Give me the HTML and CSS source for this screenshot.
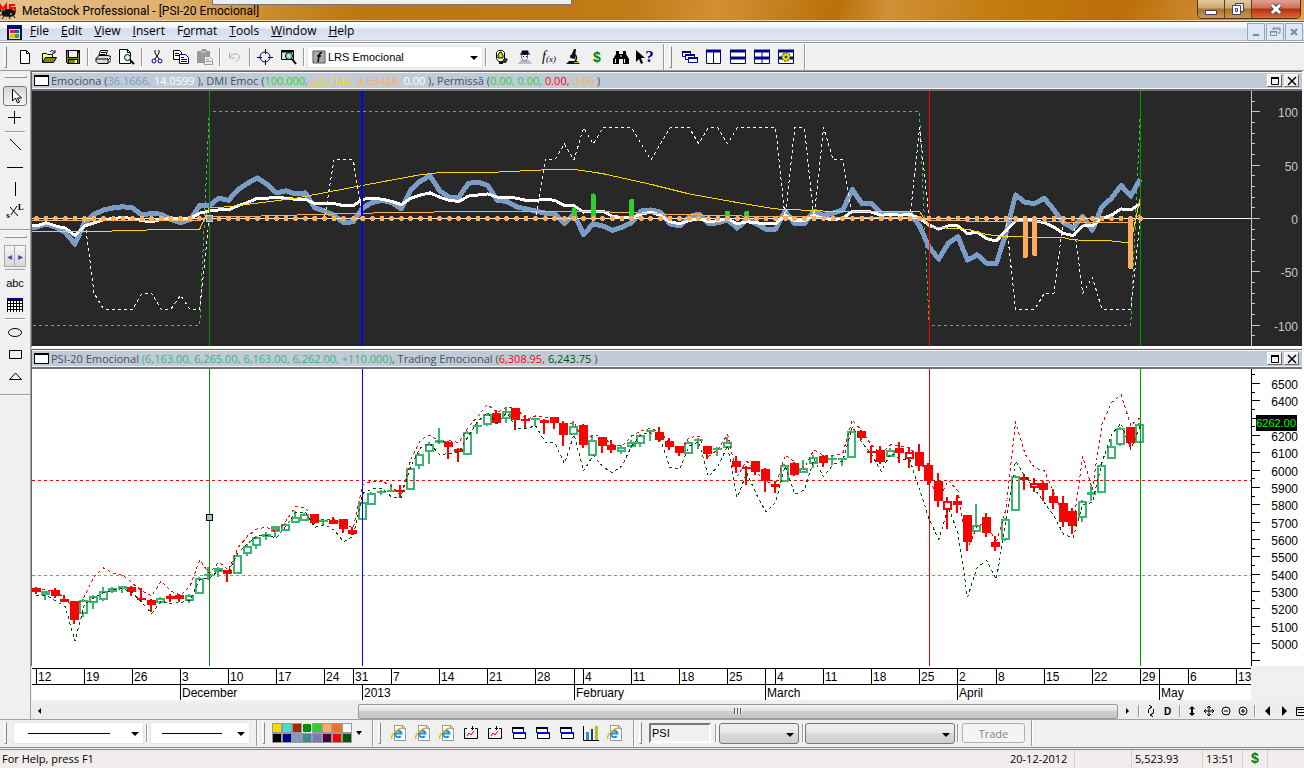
FILE: index.html
```html
<!DOCTYPE html>
<html lang="en">
<head>
  <meta charset="UTF-8" />
  <meta name="viewport" content="width=device-width, initial-scale=1.0"/>
  <title>MetaStock Professional - [PSI-20 Emocional]</title>
  <link rel="stylesheet" href="styles.css">
</head>
<body>

  <!-- shared icons -->
  <svg class="defs" width="0" height="0" aria-hidden="true">
    <symbol id="i-ie" viewBox="0 0 16 16">
      <path d="M3.500.5h8l3 3v12h-11z" fill="#fff" stroke="#999"/>
      <path d="M11.500.5v3h3" fill="none" stroke="#999"/>
      <path d="M4 8.500h6.500A3.300 3.300 0 1 0 9.800 11" fill="none" stroke="#1e8fd8" stroke-width="2"/>
      <path d="M1 14C-1 11 5 4 11 3" fill="none" stroke="#e8b020" stroke-width="1.500"/>
    </symbol>
    <symbol id="i-chartwin" viewBox="0 0 16 16">
      <path d="M4 3.500H1.500v10h13v-10H12M9.500 1v4M8 3.500h3" fill="none" stroke="#000"/>
      <path d="M4 11l2-3 2 2 3-4" fill="none" stroke="#e00"/>
    </symbol>
    <symbol id="i-panes" viewBox="0 0 16 16">
      <path d="M1.500 2.500h11v5h-11zM2.500 7.500h12v6h-12z" fill="#fff" stroke="#000"/>
      <path d="M1 3h12" stroke="#000" stroke-width="2"/>
      <path d="M2 8h12" stroke="#00f" stroke-width="2"/>
    </symbol>
  </svg>

  <header class="titlebar">
    <svg class="logo" width="18" height="20" viewBox="0 0 18 20">
      <path d="M0 11V4l3 4 3-4v7M15 4h-5v3h5v4" fill="none" stroke="#f00" stroke-width="2"/>
      <path d="M2 12c0-4 11-5 13-1 1 4-5 5-7 4-3 1-6-1-6-3zM0 9l4 2M0 14h4M4 15l-2 3M9 15l1 3M13 14l2 3" fill="#111" stroke="#111"/>
      <path d="M10 12h2v2h-2z" fill="#2aa"/>
    </svg>
    <h1>MetaStock Professional - [PSI-20 Emocional]</h1>
    <div class="ghost-window"></div>
    <div class="win-buttons">
      <button title="Minimize"><svg width="14" height="14"><path d="M1.500 8.500h11v4h-11z" fill="#fff" stroke="#445"/></svg></button>
      <button title="Restore"><svg width="14" height="14"><path d="M4.500 1.500h8v8h-8z" fill="#eee" stroke="#445"/><path d="M1.500 3.500h8v9h-8zM4.500 6.500h2v3h-2z" fill="#fff" stroke="#445"/></svg></button>
      <button class="win-close" title="Close"><svg width="14" height="14"><path d="M3 3l8 8M11 3l-8 8" stroke="#445" stroke-width="5"/><path d="M3 3l8 8M11 3l-8 8" stroke="#fff" stroke-width="3"/></svg></button>
    </div>
  </header>

  <nav class="menubar">
    <svg class="doc-icon" width="15" height="15" shape-rendering="crispEdges"><path d="M0 0h15v15H0z" fill="#113"/><path d="M1 1h13v2H1z" fill="#00a"/><path d="M2 4h11v10H2z" fill="#ddd"/><path d="M3 5h5v3H3z" fill="#f06"/><path d="M8 5h4v3H8z" fill="#06c"/><path d="M3 9h5v4H3z" fill="#cc0"/><path d="M8 9h4v4H8z" fill="#3a3"/></svg>
    <a href="#"><u>F</u>ile</a>
    <a href="#"><u>E</u>dit</a>
    <a href="#"><u>V</u>iew</a>
    <a href="#"><u>I</u>nsert</a>
    <a href="#">F<u>o</u>rmat</a>
    <a href="#"><u>T</u>ools</a>
    <a href="#"><u>W</u>indow</a>
    <a href="#"><u>H</u>elp</a>
    <div class="mdi-buttons">
      <button title="Minimize chart"><svg width="12" height="12"><path d="M3 9h6" stroke="#7b8794" stroke-width="2"/></svg></button>
      <button title="Restore chart"><svg width="12" height="12"><path d="M4 4V2h7v5H9M4 3h7M1.500 5.500h6v4h-6zM1 6h7" fill="none" stroke="#7b8794"/></svg></button>
      <button title="Close chart"><svg width="12" height="12"><path d="M3 3l6 6M9 3l-6 6" stroke="#7b8794" stroke-width="2"/></svg></button>
    </div>
  </nav>

  <div class="toolbar">
    <i class="grip"></i>
    <button title="New"><svg width="16" height="16"><path d="M3.500 1.500h6l3 3v10h-9zM9.500 1.500v3h3" fill="#fff" stroke="#000"/></svg></button>
    <button title="Open"><svg width="16" height="16"><path d="M1.500 13.500v-9h4l1 1h5v3" fill="#ff8" stroke="#000"/><path d="M1.500 13.500l3-5h11l-3 5z" fill="#880" stroke="#000"/><path d="M9 3c1-2 3-2 4 0M14 1v3h-3" fill="none" stroke="#000"/></svg></button>
    <button title="Save"><svg width="16" height="16" shape-rendering="crispEdges"><path d="M1 1h14v14H2l-1-1z" fill="#000"/><path d="M2 2h1v12H2zM13 4h1v10h-1zM3 9h10v1H3z" fill="#880"/><path d="M4 2h8v6H4z" fill="#eee"/><path d="M4 11h6v3H4z" fill="#880"/><path d="M10 11h2v3h-2z" fill="#fff"/></svg></button>
    <i class="sep"></i>
    <button title="Print"><svg width="16" height="16"><path d="M3.500 7.500l2-6h7l-2 6" fill="#fff" stroke="#000"/><path d="M1 9.500l3-3h9l3 1v4l-3 3H3l-2-2z" fill="#ddd" stroke="#000"/><path d="M1 10h12v4M6 3.500h5M5 5.500h5M13 11l2-2" stroke="#000" fill="none"/><path d="M8 12h2" stroke="#cc0"/></svg></button>
    <button title="Print preview"><svg width="16" height="16"><path d="M.5.5h8l3 3v11H.500z" fill="#fff" stroke="#000"/><path d="M8.500.5v3h3" fill="none" stroke="#000"/><circle cx="8.500" cy="8.500" r="3" fill="#bff" stroke="#000"/><path d="M11 11l4 4" stroke="#000" stroke-width="2"/></svg></button>
    <i class="sep"></i>
    <button title="Cut"><svg width="16" height="16"><path d="M6 1v3l4 6M10 1v3l-4 6" fill="none" stroke="#000"/><g fill="none" stroke="#008"><circle cx="5" cy="12" r="2"/><circle cx="11" cy="12" r="2"/></g></svg></button>
    <button title="Copy"><svg width="16" height="16"><path d="M.500 1.500h6l2 2v7h-8z" fill="#fff" stroke="#000"/><path d="M2 4.500h4M2 6.500h4" stroke="#000"/><path d="M6.500 5.500h6l3 3v6h-9z" fill="#fff" stroke="#008"/><path d="M8 8.500h3M8 10.500h6M8 12.500h6" stroke="#008"/></svg></button>
    <button title="Paste" disabled><svg width="16" height="16"><path d="M0 2h4l1-2h4l1 2h3v12H0z" fill="#999"/><path d="M4 3h5" stroke="#ddd"/><path d="M7.500 7.500h5l3 3v5h-8z" fill="#eee" stroke="#999"/><path d="M9 10.500h3M9 12.500h5" stroke="#999"/></svg></button>
    <i class="sep"></i>
    <button title="Undo" disabled><svg width="16" height="16"><path d="M2.500 4v5h5M3 8c3-5 11-3 9 1-1 2-2 3-3 3" fill="none" stroke="#aaa"/></svg></button>
    <i class="sep"></i>
    <button title="Crosshair"><svg width="16" height="16"><circle cx="8" cy="8" r="5" fill="none" stroke="#008"/><path d="M8.500 0v5M8.500 11v5M0 8.500h5M11 8.500h5" stroke="#000"/></svg></button>
    <button title="Zoom chart"><svg width="16" height="16"><path d="M.500 1.500h12v9H.500z" fill="#ddd" stroke="#000"/><path d="M0 2.500h13" stroke="#000" stroke-width="2"/><circle cx="8" cy="7" r="3.500" fill="#8dd" stroke="#000"/><path d="M7 6l2 2" stroke="#fff"/><path d="M11 10l4 5" stroke="#000" stroke-width="2"/></svg></button>
    <i class="sep"></i>
    <div class="combo template">
      <svg width="14" height="14"><path d="M1 1h12v12H1z" fill="#aaa" stroke="#555"/><path d="M10 3c-3-1-3 3-4 9M5 6h4" fill="none" stroke="#000" stroke-width="1.500"/></svg>
      <select aria-label="Indicator"><option>LRS Emocional</option></select>
    </div>
    <i class="sep"></i>
    <button title="Expert"><svg width="16" height="16"><path d="M10 8l5 2-2 4H7z" fill="#333"/><path d="M3.500 3.500l2-2h4l2 2v6l-2 3h-4l-2-3z" fill="#fff" stroke="#000"/><path d="M5 6l2-3h1l2 3v3H5z" fill="#dd0" stroke="#000"/><path d="M6 12h4v3H6z" fill="#111"/></svg></button>
    <button title="Explorer"><svg width="16" height="16"><path d="M1 15l3-4h8l3 4z" fill="#bbb"/><path d="M4.500 5.500h6v4l-2 2h-2l-2-2z" fill="#eee" stroke="#777"/><path d="M5 2h6v3H5zM3 5h10" fill="#000" stroke="#000"/><path d="M6 7.500h1M9 7.500h1" stroke="#000"/><path d="M5 4h6" stroke="#008"/></svg></button>
    <button class="fx" title="Indicator builder">f<small>(x)</small></button>
    <button title="System tester"><svg width="16" height="16"><path d="M1 15l3-3h8l3 3zM5 9l4-9h2l-1 10z" fill="#111"/><path d="M5 7h5M10 6c2 1 2 4 0 6" fill="none" stroke="#111" stroke-width="1.500"/><path d="M9 13.500h4" stroke="#cc0"/></svg></button>
    <button class="dollar" title="Quotes">$</button>
    <button title="Find"><svg width="16" height="16"><path d="M3 2h3v3h4V2h3v3l3 5v5H10v-5H6v5H0v-5l3-5z" fill="#000"/><path d="M2.500 10v4M11.500 10v4M7 7h2" stroke="#fff"/></svg></button>
    <button class="help" title="Help"><svg width="9" height="16"><path d="M0 1v12l3-3 2 5 2-1-2-5h4z" fill="#000"/></svg><b>?</b></button>
    <i class="sep group-end"></i>
    <i class="grip"></i>
    <button title="Cascade"><svg width="16" height="16" fill="#fff" stroke="#008"><path d="M.500 2.500h8v5h-8z"/><path d="M3.500 5.500h9v5h-9z"/><path d="M6.500 8.500h9v5h-9z"/><path d="M0 3h9M3 6h10M6 9h10" stroke-width="2"/></svg></button>
    <button title="Tile columns"><svg width="16" height="16" fill="#fff" stroke="#008"><path d="M.500 1.500h14v13h-14zM7.500 1v14"/><path d="M0 2h15" stroke-width="3"/></svg></button>
    <button title="Tile rows"><svg width="16" height="16" fill="#fff" stroke="#008"><path d="M.500 1.500h15v13H.500z"/><path d="M0 2h16M0 9h16" stroke-width="3"/></svg></button>
    <button title="Tile grid"><svg width="16" height="16" fill="#fff" stroke="#008"><path d="M.500 1.500h15v13H.500zM8 1v14"/><path d="M0 2h16M0 9h16" stroke-width="3"/></svg></button>
    <button title="Layout options"><svg width="16" height="16" fill="#fff" stroke="#008"><path d="M.500 1.500h15v13H.500z"/><path d="M0 2h16M0 9h16" stroke-width="3"/><circle cx="8" cy="8" r="4" fill="#ee0" stroke="#660" stroke-width="1.500" stroke-dasharray="2 1"/><circle cx="8" cy="8" r="1" stroke="#000"/></svg></button>
    <i class="sep group-end"></i>
  </div>

  <main class="workspace">
    <aside class="tools">
      <i class="bar-grip"></i>
      <button class="on" title="Pointer"><svg width="16" height="18"><path d="M5.500 2v12l3-3 2 5 2-1-2-4h4z" fill="#fff" stroke="#000"/></svg></button>
      <button title="Crosshair"><svg width="16" height="16"><path d="M7.500 1v13M1 7.500h13" stroke="#000"/></svg></button>
      <i class="rule"></i>
      <button title="Trendline"><svg width="16" height="16"><path d="M3 2l11 11" stroke="#000"/></svg></button>
      <button title="Horizontal line"><svg width="16" height="16"><path d="M0 8.500h16" stroke="#000"/></svg></button>
      <button title="Vertical line"><svg width="16" height="16"><path d="M8.500 1v14" stroke="#000"/></svg></button>
      <button class="sl" title="Speed lines"><b>s</b><svg width="8" height="14"><path d="M0 3l8 9M1 11l6-9" stroke="#000"/></svg><b>L</b></button>
      <i class="rule full"></i>
      <i class="bar-grip"></i>
      <div class="pager"><button title="Previous">◂</button><button title="Next">▸</button></div>
      <i class="rule"></i>
      <button class="abc" title="Text">abc</button>
      <button title="Grid"><svg width="16" height="16" shape-rendering="crispEdges"><path d="M0 1h16v14H0z" fill="#000"/><path d="M0 1h16v2H0z" fill="#008"/><path d="M1 5h14M1 8h14M1 11h14M1 13.500h14" stroke="#fff" stroke-width="2"/><path d="M3.500 3v12M6.500 3v12M9.500 3v12M12.500 3v12M0 6.500h16M0 9.500h16M0 12.500h16" stroke="#000"/></svg></button>
      <i class="rule"></i>
      <button title="Ellipse"><svg width="16" height="16"><ellipse cx="8" cy="8.500" rx="6.500" ry="4" fill="none" stroke="#000"/></svg></button>
      <button title="Rectangle"><svg width="16" height="16"><path d="M2.500 4.500h12v8h-12z" fill="none" stroke="#000"/></svg></button>
      <button title="Triangle"><svg width="16" height="16"><path d="M2.500 11.500h12L8.500 5z" fill="none" stroke="#000"/></svg></button>
      <i class="rule full"></i>
    </aside>

    <div class="panes">
      <section class="pane upper">
        <div class="pane-head">
          <i class="win-mark"></i>
          <p>Emociona (<span class="c-blue">36.1666,</span> <span class="c-white">14.0599</span> ), DMI Emoc (<span class="c-lime">100.000,</span> <span class="c-gold">22.7142,</span> <span class="c-orange">3.63428,</span> <span class="c-white">0.00</span> ), Permissã (<span class="c-lime">0.00, 0.00,</span> <span class="c-red">0.00,</span> <span class="c-orange">0.00</span> )</p>
          <button title="Maximize"><svg width="10" height="10"><path d="M1.500 2v6.500h7V2" fill="none" stroke="#000"/><path d="M1 2h8" stroke="#000" stroke-width="2"/></svg></button>
          <button title="Close"><svg width="10" height="10"><path d="M1 1l8 8M9 1l-8 8" stroke="#000" stroke-width="1.500"/></svg></button>
        </div>
        <div class="plot dark" id="oscillator"></div>
      </section>

      <section class="pane lower">
        <div class="pane-head">
          <i class="win-mark"></i>
          <p>PSI-20 Emocional <span class="c-green">(6,163.00, 6,265.00, 6,163.00, 6,262.00, +110.000)</span>, Trading Emocional (<span class="c-red">6,308.95,</span> <span class="c-dark">6,243.75</span> )</p>
          <button title="Maximize"><svg width="10" height="10"><path d="M1.500 2v6.500h7V2" fill="none" stroke="#000"/><path d="M1 2h8" stroke="#000" stroke-width="2"/></svg></button>
          <button title="Close"><svg width="10" height="10"><path d="M1 1l8 8M9 1l-8 8" stroke="#000" stroke-width="1.500"/></svg></button>
        </div>
        <div class="plot" id="price"></div>
      </section>

      <div class="dates" id="dates"></div>

      <div class="scroll-row">
        <button title="Scroll left"><svg width="8" height="8"><path d="M5 1v6L2 4z"/></svg></button>
        <div class="track"><div class="thumb"><i></i></div></div>
        <button title="Scroll right"><svg width="8" height="8"><path d="M3 1v6l3-3z"/></svg></button>
        <i class="sep"></i>
        <button title="Refresh"><svg width="12" height="12"><path d="M3.500 8V4.500L6 2M8.500 4v4L6 10M4 0l3 2-3 2M8 8l-3 2 3 2" fill="none" stroke="#000"/></svg></button>
        <button class="daily" title="Daily">D</button>
        <i class="sep"></i>
        <button title="Stretch"><svg width="12" height="12"><path d="M6 1l3 3H7v4h2l-3 3-3-3h2V4H3z"/></svg></button>
        <button title="Move"><svg width="12" height="12"><path d="M6 1v10M1 6h10M4 3l2-2 2 2M4 9l2 2 2-2M3 4L1 6l2 2M9 4l2 2-2 2" fill="none" stroke="#000"/></svg></button>
        <button title="Zoom out"><svg width="12" height="12"><circle cx="6" cy="6" r="4" fill="none" stroke="#000"/><path d="M4 6h4" stroke="#000"/></svg></button>
        <button title="Zoom in"><svg width="12" height="12"><circle cx="6" cy="6" r="4" fill="none" stroke="#000"/><path d="M4 6h4M6 4v4" stroke="#000"/></svg></button>
        <i class="sep"></i>
        <button title="Back"><svg width="12" height="12"><path d="M9 1v10L4 6z"/></svg></button>
        <button title="Forward"><svg width="12" height="12"><path d="M4 1v10l5-5z"/></svg></button>
        <button title="Window list"><svg width="12" height="12"><path d="M1.500 2.500h9v8h-9zM1 4.500h10M3 7.500h6" fill="none" stroke="#000"/></svg></button>
      </div>
    </div>
  </main>

  <div class="toolbar bottom">
    <i class="grip"></i>
    <div class="combo line-style"><i></i><select aria-label="Line style"><option></option></select></div>
    <i class="sep"></i>
    <div class="combo line-width"><i></i><select aria-label="Line width"><option></option></select></div>
    <i class="sep group-end"></i>
    <i class="grip"></i>
    <div class="swatches" id="swatches"></div>
    <button class="more" title="More colors"><svg width="8" height="8"><path d="M1 2h6L4 6z"/></svg></button>
    <i class="sep group-end"></i>
    <i class="grip"></i>
    <button title="Reports"><svg width="16" height="16"><use href="#i-ie"/></svg></button>
    <button title="News"><svg width="16" height="16"><use href="#i-ie"/></svg></button>
    <button title="Web quotes"><svg width="16" height="16"><use href="#i-ie"/></svg></button>
    <button title="New chart"><svg width="16" height="16"><use href="#i-chartwin"/></svg></button>
    <button title="Inner window"><svg width="16" height="16"><use href="#i-chartwin"/></svg></button>
    <button title="Layout one"><svg width="16" height="16"><use href="#i-panes"/></svg></button>
    <button title="Layout two"><svg width="16" height="16"><use href="#i-panes"/></svg></button>
    <button title="Layout three"><svg width="16" height="16"><use href="#i-panes"/></svg></button>
    <button title="Statistics"><svg width="18" height="16"><path d="M1.500 1v14.500H17" fill="none" stroke="#000"/><path d="M3 10h3v5H3z" fill="#fff"/><path d="M4 7h3v8H4z" fill="#29c"/><path d="M9 4h2v11H9z" fill="#528"/><path d="M13 1h3v14h-3z" fill="#9c2"/></svg></button>
    <button title="Online"><svg width="16" height="16"><use href="#i-ie"/></svg></button>
    <i class="sep group-end"></i>
    <i class="grip"></i>
    <input class="symbol" type="text" value="PSI" aria-label="Symbol">
    <i class="sep"></i>
    <div class="combo gray account"><select aria-label="Account"><option></option></select></div>
    <i class="sep tight"></i>
    <div class="combo gray order"><select aria-label="Order type"><option></option></select></div>
    <i class="sep"></i>
    <button class="trade" disabled>Trade</button>
    <i class="sep group-end"></i>
  </div>

  <footer class="status">
    <span class="hint">For Help, press F1</span>
    <span class="date">20-12-2012</span>
    <span class="blank"></span>
    <span class="value">5,523.93</span>
    <span class="time">13:51</span>
    <span class="money">$</span>
    <span class="end"></span>
  </footer>

  <script src="script.js"></script>
</body>
</html>
```
FILE: styles.css
```css
* {
  box-sizing: border-box;
}

body {
  margin: 0;
  height: 100vh;
  min-height: 600px;
  display: flex;
  flex-direction: column;
  overflow: hidden;
  background: #f0f0f0;
  color: #000;
  font-family: "Open Sans", "Noto Sans", sans-serif;
  font-size: 12px;
}

.defs {
  position: absolute;
}

button {
  border: none;
  background: none;
  padding: 0;
  color: inherit;
  font: inherit;
  display: flex;
  align-items: center;
  justify-content: center;
  flex: none;
}

svg {
  display: block;
  flex: none;
}

/* title bar */
.titlebar {
  position: relative;
  height: 22px;
  flex: none;
  display: flex;
  align-items: center;
  background: linear-gradient(100deg, #e6c08a 0, #dfae6a 180px, #c98a2c 270px, #bd7610 360px, #c07a16 48%, #d29032 55%, #b8700a 64%, #d09036 68%, #c27c10 76%, #ba6e08 86%, #d3913a 94%, #dda050 100%);
  border-bottom: 1px solid #7a4d14;
  box-shadow: inset 0 -1px #f0d6a8;
}

.titlebar h1 {
  margin: 0 0 0 4px;
  font-family: Roboto, "Open Sans", sans-serif;
  font-size: 12px;
  line-height: 20px;
  font-weight: normal;
}

.ghost-window {
  position: absolute;
  left: 212px;
  top: 0;
  width: 360px;
  height: 5px;
  background: #eee;
  border: 1px solid #777;
  border-top: none;
}

.win-buttons {
  margin-left: auto;
  margin-right: 3px;
  align-self: flex-start;
  display: flex;
  height: 19px;
  border: 1px solid #4b3418;
  border-top: none;
  border-radius: 0 0 5px 5px;
  overflow: hidden;
}

.win-buttons button {
  width: 27px;
  background: linear-gradient(#e2c9a0 0, #cfa870 45%, #a9702a 50%, #c99a55 100%);
  border-right: 1px solid #5a4020;
}

.win-buttons .win-close {
  width: 48px;
  border-right: none;
  background: linear-gradient(#e0a090 0, #d0705a 45%, #b32c10 50%, #dc6a3a 100%);
}

/* menu */
.menubar {
  height: 21px;
  flex: none;
  display: flex;
  align-items: center;
  gap: 12px;
  padding: 0 1px 0 7px;
  background: linear-gradient(#fff 0, #eef1f8 6px, #d5dcee 7px, #e2e6f6 18px, #b0b8cc 18px, #b0b8cc 19px, #fff 19px);
  border-bottom: 1px solid #909090;
}

.doc-icon {
  margin-right: -4px;
}

.menubar a {
  color: #000;
  text-decoration: none;
  line-height: 18px;
  padding-bottom: 2px;
}

.mdi-buttons {
  margin-left: auto;
  display: flex;
  gap: 1px;
}

.mdi-buttons button {
  width: 18px;
  height: 18px;
  background: #dbe9f8;
  border: 1px solid #93a5b8;
}

/* toolbars */
.toolbar {
  height: 28px;
  flex: none;
  display: flex;
  align-items: center;
  padding-left: 4px;
  border-top: 1px solid #fff;
  border-bottom: 1px solid #999;
}

.toolbar button {
  width: 24px;
  height: 24px;
}

.grip {
  flex: none;
  width: 3px;
  height: 22px;
  margin-right: 6px;
  border: 1px solid #fff;
  border-right-color: #888;
  border-bottom-color: #888;
}

.sep {
  flex: none;
  width: 2px;
  height: 18px;
  margin: 0 2px;
  border-left: 1px solid #999;
  border-right: 1px solid #fff;
}

.sep.group-end {
  height: 26px;
  margin: 0 4px 0 6px;
}

.sep.tight {
  margin: 0 1px 0 3px;
}

.combo {
  position: relative;
  display: flex;
  align-items: center;
  flex: none;
  height: 22px;
  background: #fff;
  border: 1px solid #e4e6ea;
}

.combo select {
  flex: 1;
  min-width: 0;
  height: 100%;
  padding: 0 3px;
  border: none;
  background: none;
  appearance: none;
  color: #000;
  font: 11px "Liberation Sans", sans-serif;
}

.combo::after {
  content: "";
  position: absolute;
  right: 4px;
  top: 9px;
  border: 4px solid transparent;
  border-top-color: #000;
  border-bottom: none;
  pointer-events: none;
}

.template {
  width: 176px;
  padding-left: 4px;
  margin: 0;
}

.template select {
  padding: 0 2px;
}

.toolbar .fx {
  font: italic 14px "Liberation Serif", serif;
}

.fx small {
  font-size: 9px;
  padding-top: 4px;
}

.toolbar .dollar {
  color: #008000;
  font: bold 14px "Liberation Sans", sans-serif;
}

.toolbar .help {
  color: #000080;
  font: bold 17px "Liberation Serif", serif;
}

/* chart area */
.workspace {
  flex: 1;
  min-height: 0;
  display: flex;
}

.tools {
  width: 31px;
  flex: none;
  display: flex;
  flex-direction: column;
  align-items: center;
  border-right: 1px solid #a0a0a0;
}

.tools > button {
  width: 24px;
  height: 22px;
}

.tools .on {
  border: 1px solid #777;
  border-radius: 3px;
  height: 20px;
  margin: 1px 0;
  background: linear-gradient(#d6d6d6, #f4f4f4);
}

.bar-grip {
  width: 23px;
  height: 3px;
  margin: 4px 0 7px;
  border: 1px solid #fff;
  border-right-color: #999;
  border-bottom-color: #999;
}

.rule {
  width: 20px;
  height: 2px;
  margin: 2px 0 1px;
  border-top: 1px solid #999;
  border-bottom: 1px solid #fff;
}

.rule.full {
  width: 100%;
  margin: 7px 0 0;
}

.sl {
  font: bold 9px "Liberation Serif", serif;
}

.sl b:first-child {
  padding-top: 7px;
}

.sl b:last-child {
  padding-bottom: 8px;
}

.pager {
  display: flex;
  height: 22px;
  border: 1px solid #a8a8a8;
}

.pager button {
  width: 10px;
  color: #3a569a;
  font-size: 10px;
  background: linear-gradient(#f6f6f6, #d8d8d8);
}

.pager button:first-child {
  border-right: 1px solid #a8a8a8;
}

.tools .abc {
  font: 11px "Liberation Sans", sans-serif;
}

.panes {
  flex: 1;
  min-width: 0;
  display: flex;
  flex-direction: column;
}

.pane {
  display: flex;
  flex-direction: column;
  min-height: 0;
  border-left: 1px solid #666;
  border-right: 2px solid #fff;
}

/* the flex ratios keep both plots in proportion when the window grows */
.upper {
  flex: 255 1 22px;
  border-bottom: 2px solid #fff;
}

.lower {
  flex: 297 1 20px;
  margin-top: 1px;
}

.pane-head {
  height: 20px;
  flex: none;
  display: flex;
  align-items: center;
  gap: 1px;
  padding: 0 3px 0 2px;
  background: #bfcbd8;
  border-top: 1px solid #666;
  border-bottom: 2px solid #707070;
  box-shadow: inset 0 1px #f4f4f4, inset 0 -1px #f4f4f4;
  color: #45505c;
}

.pane-head p {
  margin: 0;
  flex: 1;
  overflow: hidden;
  white-space: nowrap;
  font-size: 11px;
  line-height: 16px;
}

.win-mark {
  width: 15px;
  height: 11px;
  margin-right: 1px;
  background: #fff;
  border: 1px solid #000;
  border-top-width: 2px;
}

.pane-head button {
  width: 15px;
  height: 13px;
  margin-left: 1px;
  background: #f0f0f0;
  border: 1px solid #fff;
  border-right-color: #666;
  border-bottom-color: #666;
}

.c-blue { color: #7b9cc4; }
.c-white { color: #fff; }
.c-lime { color: #32cd32; }
.c-gold { color: #ffd700; }
.c-orange { color: #ffad5c; }
.c-red { color: #f00; }
.c-green { color: #3cb371; }
.c-dark { color: #005000; }

.plot {
  flex: 1;
  min-height: 0;
  overflow: hidden;
  background: #fff;
}

.plot.dark {
  background: #282828;
}

.plot text,
.dates text {
  font-family: "Liberation Sans", Arial, sans-serif;
  font-size: 12px;
}

.plot .last {
  font-size: 11px;
}

.dates {
  height: 35px;
  flex: none;
  margin-left: 1px;
  overflow: hidden;
}

.scroll-row {
  height: 16px;
  flex: none;
  display: flex;
  align-items: center;
  margin-top: 2px;
  margin-right: -5px;
  background: #ececec;
}

.scroll-row button {
  width: 17px;
  height: 15px;
}

.scroll-row .sep {
  height: 12px;
  margin: 0 2px 0 3px;
}

.scroll-row .daily {
  font: bold 10px "Liberation Sans", sans-serif;
}

.track {
  flex: 1;
  height: 15px;
  display: flex;
  justify-content: flex-end;
}

.thumb {
  width: 71%;
  display: flex;
  align-items: center;
  justify-content: center;
  background: linear-gradient(#f4f4f4 0, #e0e0e0 45%, #cfcfcf 50%, #c4c4c4 100%);
  border: 1px solid #999;
  border-radius: 2px;
}

.thumb i {
  width: 8px;
  height: 6px;
  background: repeating-linear-gradient(90deg, #555 0, #555 1px, #eee 1px, #eee 3px);
}

/* bottom toolbar */
.bottom {
  height: 31px;
  padding-bottom: 1px;
  border-top: 1px solid #a0a0a0;
  border-bottom: 3px double #888;
}

.bottom .combo i {
  position: absolute;
  left: 14px;
  top: 10px;
  border-top: 1px solid #000;
}

.line-style {
  width: 131px;
}

.line-style i {
  width: 82px;
}

.line-width {
  width: 100px;
}

.bottom .line-width i {
  left: 11px;
  width: 60px;
}

.swatches {
  display: grid;
  grid-template-columns: repeat(8, 10px);
  grid-auto-rows: 10px;
  margin-left: 1px;
}

.swatches button {
  width: 10px;
  height: 10px;
  border: 1px solid #999;
}

.swatches .picked {
  border: 1px dashed #fff;
}

.bottom .more {
  width: 14px;
}

.symbol {
  width: 62px;
  height: 20px;
  margin-left: 1px;
  margin-right: 2px;
  padding: 0 1px;
  background: #f0f0f0;
  border: 2px solid #fff;
  border-top-color: #777;
  border-left-color: #777;
  font: 11px "Liberation Sans", sans-serif;
}

.gray {
  height: 21px;
  border: 1px solid #777;
  border-radius: 3px;
  background: linear-gradient(#f0f0f0 0, #e6e6e6 48%, #d8d8d8 52%, #d0d0d0 100%);
}

.account {
  width: 80px;
}

.order {
  width: 150px;
}

.toolbar .trade {
  width: 63px;
  height: 20px;
  margin-left: 1px;
  border: 1px solid #adb2b5;
  border-radius: 3px;
  background: #f4f4f4;
  color: #838383;
  font-size: 11px;
}

/* status bar */
.status {
  height: 18px;
  flex: none;
  display: flex;
  align-items: stretch;
  background: #f1edec;
  font-size: 11px;
  line-height: 18px;
}

.status span {
  flex: none;
  padding: 0 3px;
  border-right: 1px solid #d4d0d0;
}

.status .hint {
  flex: 1;
  padding-left: 2px;
  border: none;
}

.status .date {
  width: 68px;
}

.status .blank {
  width: 57px;
}

.status .value {
  width: 71px;
}

.status .time {
  width: 40px;
}

.status .money {
  width: 25px;
  text-align: center;
  color: #008000;
  font: bold 14px/17px "Liberation Sans", sans-serif;
}

.status .end {
  width: 36px;
  border: none;
}
```
FILE: script.js
```js
// indicator values, one per trading day from 12 Nov
const emo = [-8,-5,-8,-13,-24,-4,4,8,10,11,10,3,5,4,-1,-4,-1,12,12,19,17,27,33,38,32,24,26,23,24,10,7,3,-4,-3,10,15,17,15,9,27,
  35,40,26,20,20,33,34,31,17,16,11,9,7,5,4,-5,4,-15,-5,-7,-11,-8,-4,7,8,6,-5,-7,2,4,-5,-4,-1,-9,-1,-5,-10,-10,7,-5,
  -5,7,3,5,8,27,14,14,5,5,4,5,-7,-27,-38,-23,-17,-39,-34,-42,-42,-14,22,15,14,19,8,-4,-9,2,-11,11,19,31,21,37];
const signal = [-7,-4,-7,-9,-16,-7,-4,-1,0,1,0,-2,-3,-1,0,0,0,5,7,8,8,12,15,19,19,20,19,18,18,14,14,14,12,12,18,19,18,16,13,19,
  22,24,20,17,16,21,22,23,20,20,19,17,17,18,17,12,12,6,7,7,2,1,1,4,6,3,-3,-5,-2,0,-3,-2,0,-5,-3,-4,-5,-5,3,-2,
  -2,3,0,-1,0,7,7,6,3,4,3,4,0,-6,-10,-7,-7,-14,-13,-19,-21,-11,-2,-1,-2,-4,-8,-14,-16,-7,-7,0,3,9,8,14];

// sparse lines: [day, value]
const gold = [[-1,-12],[7,-12],[10,-11],[17,-10],[18,10],[20,11],[27,19],[34,31],[40,41],[42,43],[47,43],[54,46],[56,46],[59,42],[64,32],
  [68,23],[73,15],[77,9],[82,7],[92,7],[93,-8],[97,-10],[99,-15],[101,-17],[107,-18],[108,-20],[112,-21],[114,-23],[115,20]];
const adx = [[-1,-2],[17,-2],[18,2],[22,2],[34,5],[41,6],[47,7],[57,7],[66,4],[75,2],[85,1],[92,1],[93,-2],[104,-3],[114,-4],[115,4]];
const dmi = [[5,0],[6,-70],[7,-85],[10,-85],[11,-70],[12,-70],[13,-85],[14,-85],[15,-72],[16,-85],[17,-85],[18,0],[30,0],[31,55],[33,55],[34,0],
  [52,0],[53,55],[54,55],[55,70],[56,55],[57,85],[58,70],[59,85],[62,85],[63,70],[64,55],[65,70],[66,85],[68,85],[69,70],[70,85],[71,85],
  [72,70],[73,85],[77,85],[78,0],[79,85],[80,85],[81,0],[82,85],[83,55],[84,55],[85,0],[91,0],[92,85],[93,0],[101,0],[102,-85],[104,-85],
  [105,-70],[106,-70],[107,0],[108,0],[109,-70],[110,-55],[111,-85],[114,-85],[115,0]];
const trend = [[-1,-100],[17,-100],[18,100],[92,100],[93,-100],[114,-100],[115,100]];
const spikes = [[56,10,"#32cd32"],[58,23,"#32cd32"],[62,18,"#32cd32"],[68,3,"#32cd32"],[72,7,"#32cd32"],[74,7,"#32cd32"],
  [103,-37,"#ffad5c"],[104,-35,"#ffad5c"],[114,-47,"#ffad5c"]];

// candles: kind, body top, body bottom, wick top, wick bottom (rows of a 891-row plot)
// kinds: g hollow green, G filled green, r filled red, h hollow red
const candles = `r 665 678 662 683|G 676 686 676 703|r 672 690 666 695|r 699 708 688 708|r 706 761 706 775|g 701 741 698 752
g 690 709 687 728|g 675 700 664 706|G 665 677 663 680|G 661 668 661 682|r 664 677 660 690|r 696 700 667 709
r 702 717 699 738|g 695 709 692 714|r 690 698 683 708|r 688 700 686 709|g 687 701 684 712|g 637 681 633 683
G 624 629 604 641|g 605 616 603 632|r 612 624 612 647|g 566 621 560 621|g 539 562 535 569|g 512 537 510 550
G 505 514 499 521|G 479 499 479 512|g 474 493 470 496|g 452 469 436 469|g 443 461 440 463|r 445 470 445 474
G 461 467 459 479|r 462 473 453 473|r 460 488 460 500|h 492 500 484 507|g 409 458 405 458|g 381 415 378 415
G 374 382 372 388|G 371 376 354 376|r 372 378 358 395|g 305 370 302 370|g 264 297 260 308|g 234 254 228 293
G 222 230 187 233|r 229 242 226 279|r 249 257 246 288|g 198 265 195 266|G 177 183 168 203|g 144 173 140 180
r 142 170 133 174|g 134 156 124 170|r 127 163 127 191|r 160 166 148 186|G 157 163 155 180|r 163 172 160 203
r 154 170 154 189|r 172 206 166 240|g 180 203 166 205|r 177 238 174 245|g 222 268 208 268|r 214 239 212 261
r 236 251 223 261|g 242 254 238 263|g 227 241 223 247|g 206 230 203 242|G 193 196 191 224|r 198 221 183 227
r 226 244 216 251|r 241 260 241 270|g 227 260 225 260|G 219 224 217 248|r 241 263 241 278|G 246 250 243 270
g 227 243 214 247|r 286 304 270 320|r 303 307 300 357|r 286 317 286 326|r 310 344 306 378|r 355 364 345 380
g 296 345 293 345|r 291 326 287 330|g 306 317 283 318|g 273 290 268 305|r 269 290 266 302|G 276 282 268 297
G 275 282 275 300|g 194 274 191 274|r 195 215 191 222|r 254 262 240 290|r 253 287 240 293|g 253 270 246 273
r 247 260 228 290|h 259 275 247 305|r 259 299 234 315|r 297 346 292 356|r 345 404 321 422|h 405 429 393 488
r 404 418 387 440|r 448 527 448 554|g 477 495 414 495|r 454 500 441 513|r 528 542 510 554|g 460 519 456 524
g 330 432 327 432|r 333 341 324 372|h 350 363 337 377|r 352 373 344 405|r 390 412 370 430|r 411 467 390 482
r 436 479 427 504|g 405 454 402 467|G 379 386 359 405|g 297 379 294 379|g 241 277 219 280|g 185 233 183 239
r 184 231 184 243|g 174 229 170 229`.split(/[|\n]/).map(c => c.split(" "));

const upBand = [668,672,674,700,730,690,632,605,622,628,652,675,690,645,675,688,660,582,622,588,612,545,510,488,484,498,465,422,426,455,
  462,461,470,487,355,345,346,360,390,280,222,207,228,224,230,183,150,115,140,122,127,160,150,153,157,185,168,230,206,214,
  236,240,210,195,187,198,232,255,215,210,272,250,205,330,285,320,345,358,268,287,305,252,268,268,262,162,195,238,262,236,
  240,246,280,340,400,343,375,550,480,470,530,430,168,265,306,314,380,450,480,272,370,175,110,86,178,155];
const lowBand = [690,688,705,722,825,715,695,680,672,668,680,710,742,706,712,710,703,640,638,612,620,560,532,510,508,516,480,438,438,484,
  476,492,527,510,382,368,367,393,394,300,245,232,267,262,258,210,165,140,172,140,188,187,180,228,230,293,205,315,268,302,
  320,300,240,206,200,220,305,310,240,228,332,300,240,395,320,385,438,410,300,385,372,280,332,295,285,182,230,265,316,262,
  278,283,370,460,520,425,500,693,605,583,640,470,285,330,370,410,450,505,515,415,410,290,205,172,250,178];

const weeks = [[0,"12"],[5,"19"],[10,"26"],[15,"3"],[20,"10"],[25,"17"],[30,"24"],[33,"31"],[37,"7"],[42,"14"],[47,"21"],[52,"28"],[57,"4"],
  [62,"11"],[67,"18"],[72,"25"],[77,"4"],[82,"11"],[87,"18"],[92,"25"],[96,"2"],[100,"8"],[105,"15"],[110,"22"],[115,"29"],[120,"6"],[125,"13"]];
const months = [[15,"December"],[34,"2013"],[56,"February"],[76,"March"],[96,"April"],[117,"May"]];

const axisWidth = 51;

function frame(box) {
  const w = box.clientWidth, h = box.clientHeight, right = w - axisWidth;
  return { w, h, right, x: i => 4.5 + i * right / 127 };
}

function svg(f, body) {
  return `<svg width="${f.w}" height="${f.h}" shape-rendering="crispEdges">${body}</svg>`;
}

function poly(points, color, width, dash) {
  return `<polyline points="${points.map(p => p.join(",")).join(" ")}" fill="none" stroke="${color}" stroke-width="${width}" stroke-linejoin="round"${dash ? ` stroke-dasharray="${dash}"` : ""}/>`;
}

function line(x1, y1, x2, y2, color, dash) {
  return poly([[x1, y1], [x2, y2]], color, 1, dash);
}

function markers(f, blueWidth) {
  const at = i => Math.floor(f.x(i)) + 0.5;
  return line(at(18), 0, at(18), f.h, "#118811") + line(at(93), 0, at(93), f.h, "#f00") + line(at(115), 0, at(115), f.h, "#090") +
    poly([[at(34) - .5, 0], [at(34) - .5, f.h]], "#00f", blueWidth);
}

function drawOscillator() {
  const box = document.getElementById("oscillator"), f = frame(box);
  const y = v => (127.5 - v * 1.068) * f.h / 255;
  const full = a => a.map((v, i) => [f.x(i), y(v)]);
  const sparse = a => a.map(([i, v]) => [f.x(i), y(v)]);
  let s = "";
  s += poly(sparse(trend), "#32cd32", 1, "3 3");
  s += poly([[0, y(-8)], ...full(emo)], "#7b9cc4", 5);
  s += poly([[0, y(-7)], ...full(signal)], "#fff", 3);
  s += poly(sparse(dmi), "#fff", 1, "3 3");
  s += line(0, y(0), f.w - axisWidth, y(0), "#fff");
  s += poly(sparse(gold), "#ffd700", 1) + poly(sparse(adx), "#ffad5c", 1);
  spikes.forEach(([i, v, c]) => {
    // the round cap adds 2px, so stop the stroke short of the value
    const tip = y(v) + (v > 0 ? 2 : -2);
    s += `<line x1="${f.x(i)}" x2="${f.x(i)}" y1="${y(0)}" y2="${tip}" stroke="${c}" stroke-width="5" stroke-linecap="round"/>`;
  });
  s += markers(f, 2);
  for (let i = 0; i < 116; i++) s += `<circle cx="${f.x(i)}" cy="${y(0)}" r="2.5" fill="#ffad5c"/>`;
  s += `<rect x="${Math.floor(f.x(18)) - 2.5}" y="${y(0) - 3}" width="6" height="6" fill="#999" stroke="#ccc"/>`;

  const ax = f.right + .5;
  s += line(ax, 0, ax, f.h, "#c8c8c8") + line(ax, y(0), ax + 8, y(0), "#fff");
  for (let v = -110; v <= 110; v += 10) {
    const big = v % 50 === 0, ty = Math.floor(y(v)) + .5;
    s += line(ax, ty, ax + (big ? 8 : 3), ty, "#c8c8c8");
    if (big) s += `<text x="${f.w - 4}" y="${ty + 5}" text-anchor="end" fill="#c8c8c8">${v}</text>`;
  }
  box.innerHTML = svg(f, s);
}

function drawPrice() {
  const box = document.getElementById("price"), f = frame(box);
  const y = r => (r - 9) / 3 * f.h / 297;
  const price = p => y(52 + (6500 - p) * 0.52);
  const colors = { g: "#3cb371", G: "#3cb371", r: "#f00", h: "#f00" };
  const level = (r, c) => line(0, Math.floor(y(r)) + .5, f.right, Math.floor(y(r)) + .5, c, "3 3");
  let s = level(343, "#f00") + level(628, "#32cd32");
  candles.forEach(([kind, top, bottom, high, low], i) => {
    const x = Math.round(f.x(i)) - 1, c = colors[kind];
    const t = Math.round(y(top)), b = Math.max(Math.round(y(bottom)), t + 2);
    s += `<path d="M${x} ${y(high)}V${t}M${x} ${b}V${y(low)}" stroke="${c}" stroke-width="2"/>`;
    if (kind === "g" || kind === "h") {
      s += `<rect x="${x - 3}" y="${t + 1}" width="7" height="${Math.max(b - t - 1, 2)}" fill="none" stroke="${c}" stroke-width="2"/>`;
    } else {
      s += `<rect x="${x - 4}" y="${t}" width="9" height="${b - t}" fill="${c}"/>`;
    }
  });
  s += poly(upBand.map((r, i) => [f.x(i), y(r)]), "#f00", 1, "3 3");
  s += poly(lowBand.map((r, i) => [f.x(i), y(r)]), "#005000", 1, "3 3");
  s += markers(f, 1);
  s += `<rect x="${Math.floor(f.x(18)) - 2.5}" y="${Math.floor(y(454)) - 2.5}" width="6" height="6" fill="#bbb" stroke="#000"/>`;

  const ax = f.right + .5;
  s += line(ax, 0, ax, f.h, "#000");
  for (let p = 4900; p <= 6550; p += 50) {
    const big = p % 100 === 0, ty = Math.floor(price(p)) + .5;
    s += line(ax, ty, ax + (big ? 8 : 3), ty, "#000");
    if (big && p >= 5000 && p !== 6300) s += `<text x="${f.w - 4}" y="${ty + 5}" text-anchor="end">${p}</text>`;
  }
  s += `<rect x="${f.w - 46}" y="${y(147)}" width="41" height="16" fill="#000"/>`;
  s += `<text class="last" x="${f.w - 6}" y="${y(147) + 12}" text-anchor="end" fill="#0f0">6262.00</text>`;
  box.innerHTML = svg(f, s);
}

function drawDates() {
  const box = document.getElementById("dates");
  const f = frame(document.getElementById("price"));
  f.h = 35;
  let s = `<rect width="${f.right}" height="34" fill="#fff"/>` + line(0, 2.5, f.right, 2.5, "#000") + line(0, 18.5, f.right, 18.5, "#000");
  const tick = (i, a, b) => line(Math.floor(f.x(i)) + .5, a, Math.floor(f.x(i)) + .5, b, "#000");
  weeks.forEach(([i, t]) => s += tick(i, 3, 18) + `<text x="${Math.floor(f.x(i)) + 2}" y="15">${t}</text>`);
  months.forEach(([i, t]) => s += tick(i, i === 34 ? 18 : 3, 34) + `<text x="${Math.floor(f.x(i)) + 2}" y="31">${t}</text>`);
  s += `<rect x="${f.right}" width="${axisWidth + 2}" height="35" fill="#f0f0f0"/>`;
  box.innerHTML = svg(f, s);
}

function draw() {
  drawOscillator();
  drawPrice();
  drawDates();
}

["#ffd700", "#40e0d0", "#a52a00", "#009000", "#32cd32", "#ffad5c", "#ff6a20", "#ffffff",
 "#000000", "#000090", "#7b9cc4", "#3a8e8e", "#7878c0", "#480048", "#ff0000", "#005800"].forEach((c, i) => {
  const b = document.createElement("button");
  b.style.background = c;
  b.title = c;
  if (i === 3) b.className = "picked";
  document.getElementById("swatches").appendChild(b);
});

draw();
window.addEventListener("resize", draw);
```
